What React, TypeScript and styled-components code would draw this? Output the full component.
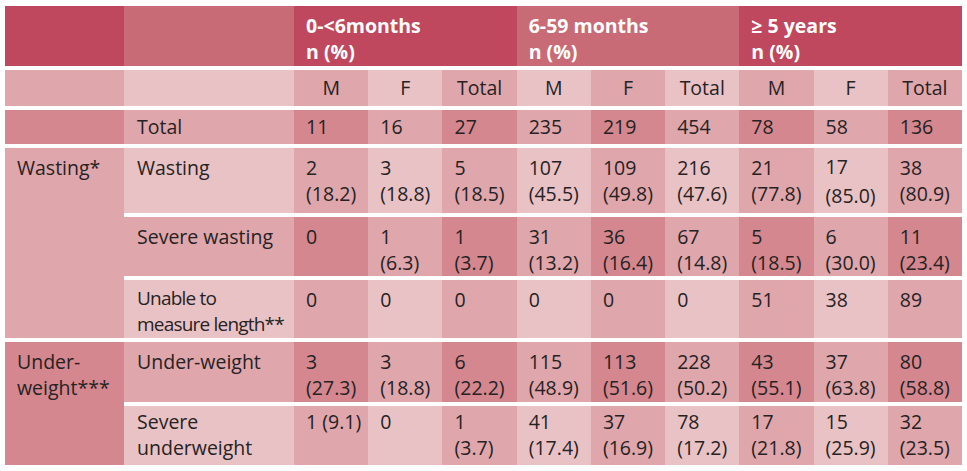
import React from "react";
import styled, { createGlobalStyle, css } from "styled-components";

const C = {
  hd: "#c0485e",
  hl: "#c86b77",
  L: "#e9c2c5",
  M: "#dfa6ac",
  D: "#d4878f",
};

type Tone = keyof typeof C;

const Global = createGlobalStyle`
  html, body { margin: 0; padding: 0; background: #ffffff; }
  * { box-sizing: border-box; }
  body { font-family: "Open Sans", "Noto Sans", sans-serif; color: #262223; }
`;

const Page = styled.div`
  padding: 6px 5px 0 5px;
  width: 967px;
  height: 471px;
  overflow: hidden;
`;

const Table = styled.table`
  border-collapse: separate;
  border-spacing: 0;
  table-layout: fixed;
  width: 957px;
  font-size: 19.5px;
`;

const Col = styled.col<{ $w: number }>`
  width: ${(p) => p.$w}px;
`;

const Row = styled.tr<{ $h: number; $first?: boolean }>`
  & > td, & > th {
    height: ${(p) => p.$h + (p.$first ? 0 : 4)}px;
    ${(p) =>
      !p.$first &&
      css`
        border-top: 4px solid #ffffff;
      `}
  }
`;

const Head = styled.th<{ $tone: Tone }>`
  background: ${(p) => C[p.$tone]};
  color: #ffffff;
  font-weight: 700;
  font-size: 19.5px;
  text-align: left;
  vertical-align: top;
  padding: 7px 0 0 12px;
  line-height: 26px;
  white-space: nowrap;
`;

const Cell = styled.td<{
  $tone: Tone;
  $align?: "left" | "center";
  $mid?: boolean;
  $lh?: number;
  $pt?: number;
  $pl?: number;
  $tight?: boolean;
}>`
  background: ${(p) => C[p.$tone]};
  text-align: ${(p) => p.$align ?? "left"};
  vertical-align: ${(p) => (p.$mid ? "middle" : "top")};
  padding: ${(p) => (p.$mid ? 0 : p.$pt ?? 7)}px 0 0
    ${(p) => (p.$align === "center" ? 0 : p.$pl ?? 12)}px;
  line-height: ${(p) => p.$lh ?? 26}px;
  white-space: nowrap;
  ${(p) =>
    p.$tight &&
    css`
      font-size: 19px;
      letter-spacing: -0.8px;
    `}
`;

const Line = styled.span`
  display: block;
`;

const groups = ["0-<6months", "6-59 months", "≥ 5 years"];

type Val = string | [string, string];

interface DataRow {
  label: string[];
  labelLh?: number;
  vals: Val[];
  h: number;
  pt: number;
  alt: boolean; // true => col1 M, data D/M ; false => col1 L, data M/L
  loose?: number[];
  tight?: boolean;
}

const rows: DataRow[] = [
  {
    label: ["Wasting"],
    h: 65,
    pt: 7,
    alt: false,
    vals: [
      ["2", "(18.2)"],
      ["3", "(18.8)"],
      ["5", "(18.5)"],
      ["107", "(45.5)"],
      ["109", "(49.8)"],
      ["216", "(47.6)"],
      ["21", "(77.8)"],
      ["17", "(85.0)"],
      ["38", "(80.9)"],
    ],
    loose: [7],
  },
  {
    label: ["Severe wasting"],
    h: 59,
    pt: 7,
    alt: true,
    vals: [
      "0",
      ["1", "(6.3)"],
      ["1", "(3.7)"],
      ["31", "(13.2)"],
      ["36", "(16.4)"],
      ["67", "(14.8)"],
      ["5", "(18.5)"],
      ["6", "(30.0)"],
      ["11", "(23.4)"],
    ],
  },
  {
    label: ["Unable to", "measure length**"],
    labelLh: 26,
    tight: true,
    h: 58,
    pt: 7,
    alt: false,
    vals: ["0", "0", "0", "0", "0", "0", "51", "38", "89"],
  },
  {
    label: ["Under-weight"],
    h: 60,
    pt: 7,
    alt: true,
    vals: [
      ["3", "(27.3)"],
      ["3", "(18.8)"],
      ["6", "(22.2)"],
      ["115", "(48.9)"],
      ["113", "(51.6)"],
      ["228", "(50.2)"],
      ["43", "(55.1)"],
      ["37", "(63.8)"],
      ["80", "(58.8)"],
    ],
  },
  {
    label: ["Severe", "underweight"],
    h: 59,
    pt: 3,
    alt: false,
    vals: [
      "1 (9.1)",
      "0",
      ["1", "(3.7)"],
      ["41", "(17.4)"],
      ["37", "(16.9)"],
      ["78", "(17.2)"],
      ["17", "(21.8)"],
      ["15", "(25.9)"],
      ["32", "(23.5)"],
    ],
  },
];

const totals = ["11", "16", "27", "235", "219", "454", "78", "58", "136"];
const sexes = ["M", "F", "Total", "M", "F", "Total", "M", "F", "Total"];

const dataTone = (alt: boolean, i: number): Tone =>
  alt ? (i % 2 === 0 ? "D" : "M") : i % 2 === 0 ? "M" : "L";

const renderVal = (v: Val) =>
  Array.isArray(v) ? (
    <>
      <Line>{v[0]}</Line>
      <Line>{v[1]}</Line>
    </>
  ) : (
    v
  );

export default function App() {
  return (
    <Page>
      <Global />
      <Table>
        <colgroup>
          <Col $w={119} />
          <Col $w={170} />
          {sexes.map((_, i) => (
            <Col key={i} $w={74.2} />
          ))}
        </colgroup>
        <tbody>
          <Row $h={60} $first>
            <Head $tone="hd" />
            <Head $tone="hl" />
            {groups.map((g, i) => (
              <Head key={g} $tone={i % 2 === 0 ? "hd" : "hl"} colSpan={3}>
                <Line>{g}</Line>
                <Line>n (%)</Line>
              </Head>
            ))}
          </Row>
          <Row $h={36}>
            <Cell $tone="M" />
            <Cell $tone="L" />
            {sexes.map((s, i) => (
              <Cell key={i} $tone={dataTone(false, i)} $align="center" $mid>
                {s}
              </Cell>
            ))}
          </Row>
          <Row $h={34}>
            <Cell $tone="D" />
            <Cell $tone="M" $mid $pl={13}>
              Total
            </Cell>
            {totals.map((t, i) => (
              <Cell key={i} $tone={dataTone(true, i)} $mid>
                {t}
              </Cell>
            ))}
          </Row>
          {rows.map((r, ri) => (
            <Row key={ri} $h={r.h}>
              {ri === 0 && (
                <Cell $tone="M" rowSpan={3}>
                  Wasting*
                </Cell>
              )}
              {ri === 3 && (
                <Cell $tone="D" rowSpan={2}>
                  <Line>Under-</Line>
                  <Line>weight***</Line>
                </Cell>
              )}
              <Cell
                $tone={r.alt ? "M" : "L"}
                $pl={13}
                $lh={r.labelLh}
                $pt={r.labelLh ? 5 : r.pt}
                $tight={r.tight}
              >
                {r.label.map((l) => (
                  <Line key={l}>{l}</Line>
                ))}
              </Cell>
              {r.vals.map((v, i) => {
                const loose = r.loose?.includes(i);
                return (
                  <Cell
                    key={i}
                    $tone={dataTone(r.alt, i)}
                    $lh={loose ? 29 : 26}
                    $pt={loose ? r.pt - 3 : r.pt}
                  >
                    {renderVal(v)}
                  </Cell>
                );
              })}
            </Row>
          ))}
        </tbody>
      </Table>
    </Page>
  );
}
